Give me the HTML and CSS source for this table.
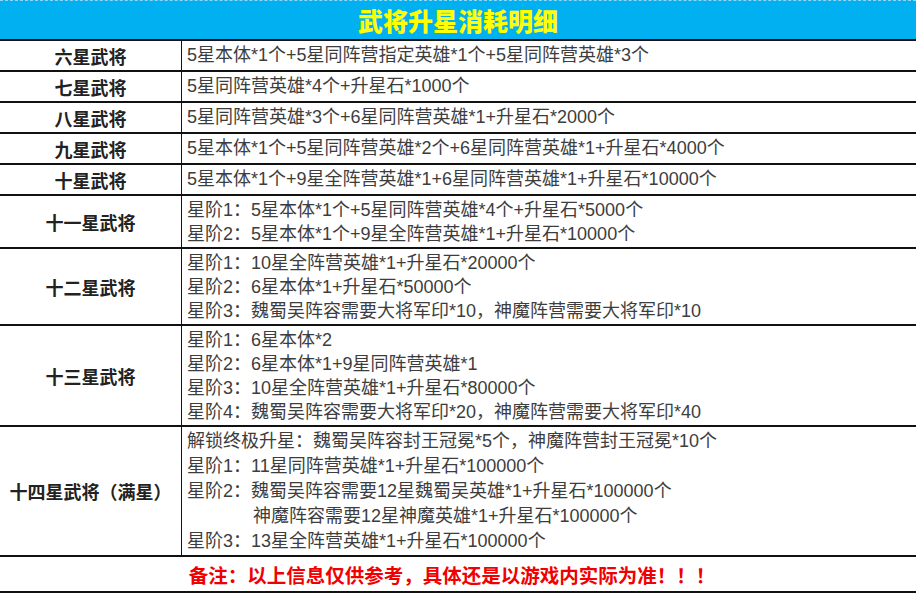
FILE: index.html
```html
<!DOCTYPE html>
<html lang="zh-CN">
<head>
<meta charset="utf-8">
<title>武将升星消耗明细</title>
<link rel="stylesheet" href="styles.css">
</head>
<body>
<div class="sheet">
  <div class="title">武将升星消耗明细</div>

  <div class="row single">
    <div class="label">六星武将</div>
    <div class="detail">5星本体*1个+5星同阵营指定英雄*1个+5星同阵营英雄*3个</div>
  </div>
  <div class="row single">
    <div class="label">七星武将</div>
    <div class="detail">5星同阵营英雄*4个+升星石*1000个</div>
  </div>
  <div class="row single">
    <div class="label">八星武将</div>
    <div class="detail">5星同阵营英雄*3个+6星同阵营英雄*1+升星石*2000个</div>
  </div>
  <div class="row single">
    <div class="label">九星武将</div>
    <div class="detail">5星本体*1个+5星同阵营英雄*2个+6星同阵营英雄*1+升星石*4000个</div>
  </div>
  <div class="row single">
    <div class="label">十星武将</div>
    <div class="detail">5星本体*1个+9星全阵营英雄*1+6星同阵营英雄*1+升星石*10000个</div>
  </div>

  <div class="row multi">
    <div class="label">十一星武将</div>
    <div class="detail">
      <div class="line">星阶1：5星本体*1个+5星同阵营英雄*4个+升星石*5000个</div>
      <div class="line">星阶2：5星本体*1个+9星全阵营英雄*1+升星石*10000个</div>
    </div>
  </div>
  <div class="row multi">
    <div class="label">十二星武将</div>
    <div class="detail">
      <div class="line">星阶1：10星全阵营英雄*1+升星石*20000个</div>
      <div class="line">星阶2：6星本体*1+升星石*50000个</div>
      <div class="line">星阶3：魏蜀吴阵容需要大将军印*10，神魔阵营需要大将军印*10</div>
    </div>
  </div>
  <div class="row multi">
    <div class="label">十三星武将</div>
    <div class="detail">
      <div class="line">星阶1：6星本体*2</div>
      <div class="line">星阶2：6星本体*1+9星同阵营英雄*1</div>
      <div class="line">星阶3：10星全阵营英雄*1+升星石*80000个</div>
      <div class="line">星阶4：魏蜀吴阵容需要大将军印*20，神魔阵营需要大将军印*40</div>
    </div>
  </div>
  <div class="row multi tall">
    <div class="label">十四星武将（满星）</div>
    <div class="detail">
      <div class="line">解锁终极升星：魏蜀吴阵容封王冠冕*5个，神魔阵营封王冠冕*10个</div>
      <div class="line">星阶1：11星同阵营英雄*1+升星石*100000个</div>
      <div class="line">星阶2：魏蜀吴阵容需要12星魏蜀吴英雄*1+升星石*100000个</div>
      <div class="line indent">神魔阵容需要12星神魔英雄*1+升星石*100000个</div>
      <div class="line">星阶3：13星全阵营英雄*1+升星石*100000个</div>
    </div>
  </div>

  <div class="note">备注：以上信息仅供参考，具体还是以游戏内实际为准！！！</div>
</div>
</body>
</html>
```

FILE: styles.css
```css
html, body {
  margin: 0;
  padding: 0;
  background: #ffffff;
}

body {
  font-family: "Liberation Sans", "Noto Sans CJK SC", sans-serif;
  font-size: 18px;
  color: #3d3d3d;
}

.sheet {
  width: 916px;
  display: flex;
  flex-direction: column;
}

.title {
  height: 38px;
  background: #00b0f0;
  border-top: 1px dashed #8fd8f5;
  border-bottom: 2px solid #111;
  color: #ffff00;
  font-family: "Noto Sans CJK SC", sans-serif;
  font-weight: 900;
  font-size: 25px;
  display: flex;
  align-items: center;
  justify-content: center;
}

.row {
  display: grid;
  grid-template-columns: 182px 1fr;
  border-bottom: 2px solid #111;
}

.label {
  display: flex;
  align-items: center;
  justify-content: center;
  border-right: 1px solid #111;
  font-weight: bold;
  color: #222;
}

.detail {
  padding-left: 5px;
}

.single .detail {
  padding-top: 2px;
  padding-bottom: 2px;
  line-height: 25px;
}

.multi .detail {
  padding-top: 2px;
  padding-bottom: 1px;
  line-height: 24px;
}

.multi.tall .detail {
  line-height: 25px;
}

.line.indent {
  padding-left: 66px;
}

.note {
  height: 34px;
  border-bottom: 2px solid #111;
  display: flex;
  align-items: center;
  justify-content: center;
  color: #f00000;
  font-weight: bold;
  font-size: 19.5px;
  padding-right: 12px;
}
```
